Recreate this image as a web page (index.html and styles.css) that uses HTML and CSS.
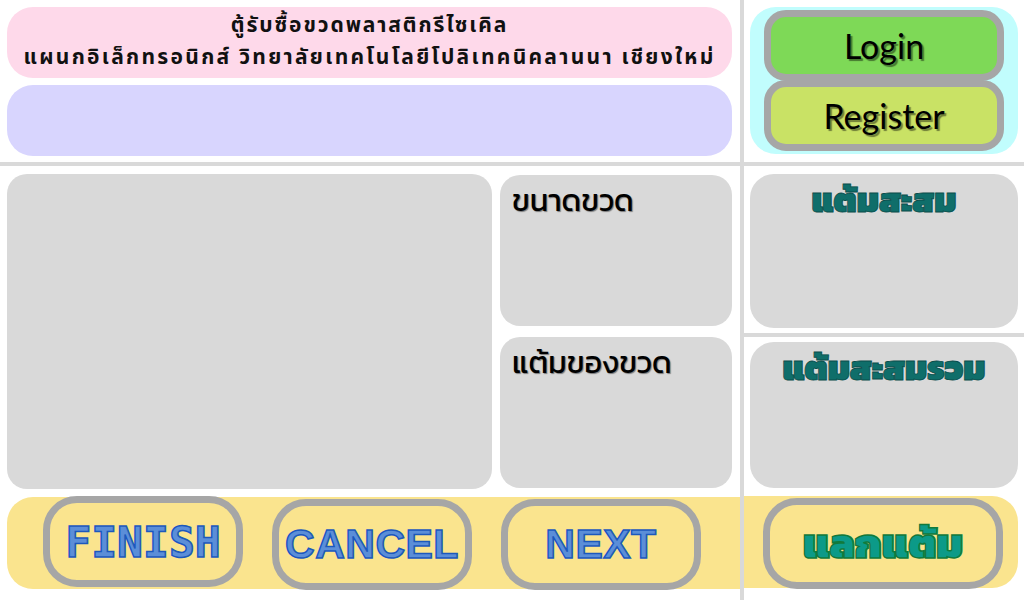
FILE: index.html
```html
<!DOCTYPE html>
<html lang="th">
<head>
<meta charset="utf-8">
<title>ตู้รับซื้อขวดพลาสติกรีไซเคิล</title>
<link rel="stylesheet" href="styles.css">
</head>
<body>
<div class="app">
  <section class="cell top-left">
    <div class="title-box">
      <div class="title-line first-line">ตู้รับซื้อขวดพลาสติกรีไซเคิล</div>
      <div class="title-line">แผนกอิเล็กทรอนิกส์ วิทยาลัยเทคโนโลยีโปลิเทคนิคลานนา เชียงใหม่</div>
    </div>
    <div class="info-box"></div>
  </section>
  <section class="cell top-right">
    <div class="auth-box">
      <button class="auth-btn login">Login</button>
      <button class="auth-btn register">Register</button>
    </div>
  </section>
  <section class="cell main-left">
    <div class="content-row">
      <div class="preview-box"></div>
      <div class="detail-col">
        <div class="detail-box"><span class="detail-label">ขนาดขวด</span></div>
        <div class="detail-box"><span class="detail-label">แต้มของขวด</span></div>
      </div>
    </div>
    <div class="action-bar left-bar">
      <button class="action-btn finish"><span class="en-label mono">FINISH</span></button>
      <button class="action-btn cancel"><span class="en-label">CANCEL</span></button>
      <button class="action-btn next"><span class="en-label">NEXT</span></button>
    </div>
  </section>
  <section class="cell main-right">
    <div class="stat-section first">
      <div class="stat-box tall"><span class="stat-label">แต้มสะสม</span></div>
    </div>
    <div class="stat-section second">
      <div class="stat-box"><span class="stat-label">แต้มสะสมรวม</span></div>
    </div>
    <div class="action-bar right-bar">
      <button class="action-btn redeem"><span class="th-label">แลกแต้ม</span></button>
    </div>
  </section>
</div>
</body>
</html>
```

FILE: styles.css
```css
* { box-sizing: border-box; }
html, body { margin: 0; padding: 0; }
body {
  width: 1024px;
  height: 600px;
  overflow: hidden;
  background: #ffffff;
  font-family: "Noto Sans Thai", "Noto Sans", "DejaVu Sans", sans-serif;
}
.app {
  display: grid;
  grid-template-columns: 740px 280px;
  grid-template-rows: 162px 434px;
  column-gap: 4px;
  row-gap: 4px;
  width: 1024px;
  height: 600px;
  background: #d9d9d9;
}
.cell { background: #ffffff; }

/* top left */
.top-left {
  padding: 7px 8px 6px 7px;
  display: flex;
  flex-direction: column;
  gap: 7px;
}
.title-box {
  height: 71px;
  background: #fed9ea;
  border-radius: 26px;
  display: flex;
  flex-direction: column;
  align-items: center;
  justify-content: center;
  gap: 3px;
  padding-bottom: 2px;
}
.title-line {
  font-size: 21px;
  font-weight: 700;
  color: #111;
  line-height: 29px;
  letter-spacing: 2.3px;
}
.title-line.first-line { letter-spacing: 1.9px; }
.info-box {
  height: 71px;
  background: #d8d5fe;
  border-radius: 26px;
}

/* top right */
.top-right { padding: 7px 6px 0 6px; }
.auth-box {
  height: 147px;
  background: #c1fdfd;
  border-radius: 26px;
  padding: 3px 14px 0 14px;
  display: flex;
  flex-direction: column;
}
.auth-btn {
  height: 71px;
  border: 7px solid #a6a6a6;
  border-radius: 22px;
  font-family: "Lato", "Open Sans", sans-serif;
  font-size: 34px;
  color: #000;
  text-shadow: 2px 2px 1px rgba(0,0,0,0.45);
  padding: 0;
  margin: 0;
}
.auth-btn.login { background: #7ed957; }
.auth-btn.register { background: #c9e265; margin-top: -1px; }

/* main left */
.main-left {
  padding: 8px 0 0 7px;
  display: flex;
  flex-direction: column;
}
.content-row {
  display: flex;
  gap: 8px;
  height: 315px;
  margin-right: 8px;
}
.preview-box {
  width: 485px;
  background: #d9d9d9;
  border-radius: 20px;
}
.detail-col {
  width: 232px;
  padding-top: 1px;
  display: flex;
  flex-direction: column;
  gap: 11px;
}
.detail-box {
  height: 151px;
  background: #d9d9d9;
  border-radius: 20px;
  padding: 2px 12px;
}
.detail-label {
  font-family: "Kanit", "Noto Sans Thai Looped", "Noto Sans Thai", sans-serif;
  font-size: 30.5px;
  color: #000;
  text-shadow: 1px 1px 1px rgba(0,0,0,0.45);
}

/* action bars */
.action-bar {
  height: 92px;
  background: #fae48e;
  margin-top: 8px;
  display: flex;
  align-items: center;
}
.left-bar {
  border-radius: 26px 0 0 26px;
  padding-left: 36px;
  gap: 29px;
}
.right-bar {
  border-radius: 0 26px 26px 0;
  margin-right: 6px;
  padding-left: 19px;
}
.action-btn {
  width: 200px;
  height: 91px;
  border: 7px solid #a6a6a6;
  border-radius: 34px;
  background: transparent;
  padding: 0;
  margin: 0;
  display: flex;
  align-items: center;
  justify-content: center;
}
.action-btn.finish { margin-top: -3px; }
.action-btn.cancel, .action-btn.next { margin-top: 2px; }
.action-btn.redeem { width: 240px; margin-top: 2px; }
.en-label {
  font-family: "Liberation Sans", Arial, sans-serif;
  font-weight: 700;
  font-size: 41px;
  color: #5b8ed8;
  -webkit-text-stroke: 1.5px #1c58bd;
  letter-spacing: 0.5px;
}
.en-label.mono {
  font-family: "DejaVu Sans Mono", "Liberation Mono", monospace;
  font-size: 43px;
  letter-spacing: 0;
}
.th-label {
  font-family: "Kanit", "Noto Sans Thai", sans-serif;
  font-weight: 900;
  font-size: 41px;
  color: #0c9a88;
  -webkit-text-stroke: 1.5px #117a3c;
}

/* main right */
.main-right {
  display: flex;
  flex-direction: column;
}
.stat-section.first {
  height: 171px;
  padding: 8px 6px 0 6px;
  border-bottom: 4px solid #d9d9d9;
}
.stat-section.second {
  padding: 5px 6px 0 6px;
}
.stat-box {
  height: 146px;
  background: #d9d9d9;
  border-radius: 24px;
  display: flex;
  justify-content: center;
  padding-top: 1px;
}
.stat-box.tall { height: 154px; }
.stat-label {
  font-family: "Kanit", "Noto Sans Thai", sans-serif;
  font-weight: 900;
  font-size: 34px;
  color: #0f6e6a;
  -webkit-text-stroke: 0.8px #0a4f4c;
}
```
